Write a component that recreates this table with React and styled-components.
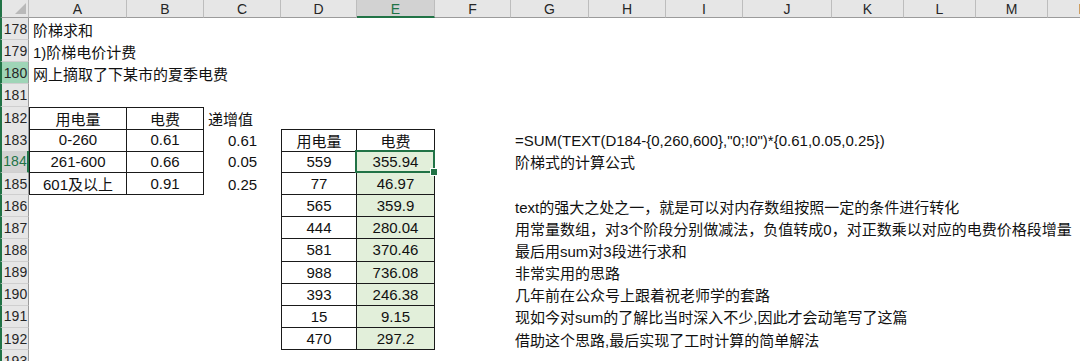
import React from "react";
import styled, { createGlobalStyle } from "styled-components";

const GlobalStyle = createGlobalStyle`
  html, body {
    margin: 0;
    padding: 0;
    background: #ffffff;
  }
  * {
    box-sizing: border-box;
  }
`;

// column widths in px: row header, then A..N
const COL_WIDTHS = [29, 98, 77, 77, 76, 78, 76, 78, 77, 77, 89, 72, 72, 72, 72];
const LETTERS = ["A", "B", "C", "D", "E", "F", "G", "H", "I", "J", "K", "L", "M", "N"];
const TEMPLATE = COL_WIDTHS.map((w) => w + "px").join(" ");

const GREEN = "#217346";
const LINE = "#1a1a1a";
const FILL = "#e2efda";

const Sheet = styled.div`
  width: 1080px;
  height: 361px;
  overflow: hidden;
  font-family: "Liberation Sans", "Noto Sans CJK SC", sans-serif;
  font-size: 15px;
  color: #111;
`;

const Row = styled.div`
  display: grid;
  grid-template-columns: ${TEMPLATE};
  height: ${(p) => p.$h}px;
`;

const Corner = styled.div`
  display: flex;
  align-items: flex-end;
  justify-content: flex-end;
  padding: 0 2px 3px 0;
  background: #e6e6e6;
  border-left: 2px solid ${GREEN};
  border-right: 1px solid #bdbdbd;
  border-bottom: 1px solid #9b9b9b;
`;

const Triangle = styled.span`
  width: 0;
  height: 0;
  border-left: 11px solid transparent;
  border-bottom: 11px solid #b9b9b9;
`;

const ColHeader = styled.div`
  display: flex;
  align-items: center;
  justify-content: center;
  font-size: 14px;
  line-height: 1;
  padding-top: 1px;
  background: ${(p) => (p.$active ? "#d2d2d2" : "#e6e6e6")};
  color: ${(p) => (p.$active ? GREEN : "#262626")};
  border-right: 1px solid #bdbdbd;
  border-bottom: ${(p) => (p.$active ? `2px solid ${GREEN}` : "1px solid #9b9b9b")};
`;

const RowHeader = styled.div`
  display: flex;
  align-items: center;
  justify-content: center;
  font-size: 14px;
  padding-left: 1px;
  background: ${(p) =>
    p.$active ? "#d2d2d2" : p.$hover ? "#9fd5b7" : "#e6e6e6"};
  color: ${(p) => (p.$active ? GREEN : "#262626")};
  border-left: 2px solid ${GREEN};
  border-right: ${(p) => (p.$active ? `2px solid ${GREEN}` : "1px solid #9b9b9b")};
  border-bottom: 1px solid #cfcfcf;
`;

const Cell = styled.div`
  position: relative;
  display: flex;
  align-items: center;
  justify-content: ${(p) => (p.$align === "center" ? "center" : "flex-start")};
  padding: 0 4px;
  white-space: nowrap;
  min-width: 0;
  background: ${(p) => (p.$fill ? FILL : "transparent")};
  border-right: ${(p) => (p.$boxed ? `1px solid ${LINE}` : "none")};
  border-bottom: ${(p) => (p.$boxed ? `1px solid ${LINE}` : "none")};
  border-top: ${(p) => (p.$top ? `1px solid ${LINE}` : "none")};
  border-left: ${(p) => (p.$left ? `1px solid ${LINE}` : "none")};

  ${(p) =>
    p.$selected &&
    `
    &::after {
      content: "";
      position: absolute;
      inset: -1px -1px -1px -2px;
      border: 2px solid ${GREEN};
      pointer-events: none;
    }
    &::before {
      content: "";
      position: absolute;
      right: -4px;
      bottom: -4px;
      width: 6px;
      height: 6px;
      background: ${GREEN};
      border: 1px solid #fff;
      z-index: 2;
    }
  `}
`;

// helpers for the two bordered tables
const boxA = (t, col, r, extra = {}) => ({
  t,
  align: "center",
  boxed: true,
  top: r === 182,
  left: col === "A",
  ...extra,
});
const boxD = (t, col, r) => ({
  t,
  align: "center",
  boxed: true,
  top: r === 183,
  left: col === "D",
  fill: col === "E" && r > 183,
  selected: col === "E" && r === 184,
});

const dTable = [
  ["用电量", "电费"],
  ["559", "355.94"],
  ["77", "46.97"],
  ["565", "359.9"],
  ["444", "280.04"],
  ["581", "370.46"],
  ["988", "736.08"],
  ["393", "246.38"],
  ["15", "9.15"],
  ["470", "297.2"],
];

const notes = {
  183: '=SUM(TEXT(D184-{0,260,600},"0;!0")*{0.61,0.05,0.25})',
  184: "阶梯式的计算公式",
  186: "text的强大之处之一，就是可以对内存数组按照一定的条件进行转化",
  187: "用常量数组，对3个阶段分别做减法，负值转成0，对正数乘以对应的电费价格段增量",
  188: "最后用sum对3段进行求和",
  189: "非常实用的思路",
  190: "几年前在公众号上跟着祝老师学的套路",
  191: "现如今对sum的了解比当时深入不少,因此才会动笔写了这篇",
  192: "借助这个思路,最后实现了工时计算的简单解法",
};

const buildRows = () => {
  const rows = [];
  for (let r = 178; r <= 193; r++) {
    const cells = {};
    if (r === 178) cells.A = { t: "阶梯求和" };
    if (r === 179) cells.A = { t: "1)阶梯电价计费" };
    if (r === 180) cells.A = { t: "网上摘取了下某市的夏季电费" };
    if (r === 182) {
      cells.A = boxA("用电量", "A", r);
      cells.B = boxA("电费", "B", r);
      cells.C = { t: "递增值" };
    }
    const tiers = {
      183: ["0-260", "0.61", "0.61"],
      184: ["261-600", "0.66", "0.05"],
      185: ["601及以上", "0.91", "0.25"],
    };
    if (tiers[r]) {
      cells.A = boxA(tiers[r][0], "A", r);
      cells.B = boxA(tiers[r][1], "B", r);
      cells.C = { t: tiers[r][2], align: "center" };
    }
    if (r >= 183 && r <= 192) {
      const [d, e] = dTable[r - 183];
      cells.D = boxD(d, "D", r);
      cells.E = boxD(e, "E", r);
    }
    if (notes[r]) cells.G = { t: notes[r] };
    rows.push({ n: r, cells });
  }
  return rows;
};

const rows = buildRows();

const App = () => {
  return (
    <>
      <GlobalStyle />
      <Sheet>
        <Row $h={18}>
          <Corner>
            <Triangle />
          </Corner>
          {LETTERS.map((l) => (
            <ColHeader key={l} $active={l === "E"}>
              {l}
            </ColHeader>
          ))}
        </Row>
        {rows.map((row) => (
          <Row key={row.n} $h={22.15}>
            <RowHeader $active={row.n === 184} $hover={row.n === 180}>
              {row.n}
            </RowHeader>
            {LETTERS.map((l) => {
              const c = row.cells[l];
              if (!c) return <Cell key={l} />;
              return (
                <Cell
                  key={l}
                  $align={c.align}
                  $boxed={c.boxed}
                  $top={c.top}
                  $left={c.left}
                  $fill={c.fill}
                  $selected={c.selected}
                >
                  <span>{c.t}</span>
                </Cell>
              );
            })}
          </Row>
        ))}
      </Sheet>
    </>
  );
};

export default App;
